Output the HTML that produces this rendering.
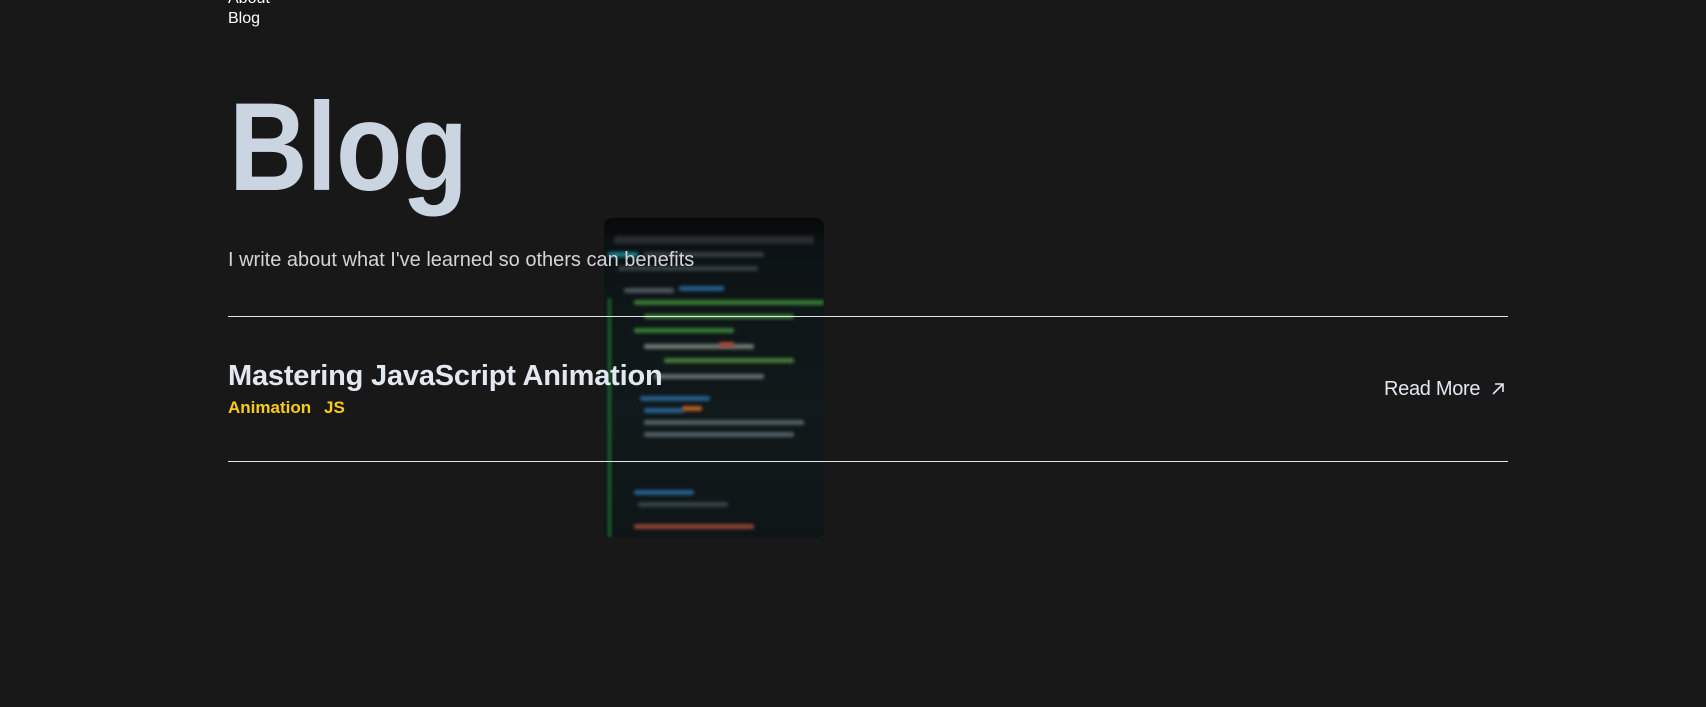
<!DOCTYPE html>
<html><head><meta charset="utf-8"><style>
html,body{margin:0;padding:0;width:1706px;height:707px;background:#181818;overflow:hidden;font-family:"Liberation Sans",sans-serif;position:relative}
.a{position:absolute;white-space:nowrap}
.nav{color:#fff;font-size:16px;left:228px}
.big{left:229px;top:85px;font-size:125px;color:#cbd5e1;letter-spacing:-1px;line-height:1;font-weight:bold;transform:scaleX(0.87);transform-origin:left}
.sub{left:228px;top:249px;font-size:20px;color:#d4d4d8;letter-spacing:0px}
.line{left:228px;width:1280px;height:1px;background:#e5e5e5}
.img{left:604px;top:218px;width:220px;height:320px;border-radius:8px;overflow:hidden;background:linear-gradient(180deg,#050707 0%,#0c1315 10%,#0f1a1c 60%,#0e1517 100%);opacity:.85}
.img i{position:absolute;height:5px;border-radius:2px;filter:blur(1.5px)}
.title{left:228px;top:360px;font-size:29px;font-weight:bold;color:#e2e8f0;letter-spacing:-0.2px}
.tag{top:398px;font-size:17px;font-weight:bold;color:#facc15}
.rm{left:1384px;top:378px;font-size:20px;color:#e2e8f0;letter-spacing:-0.3px}
</style></head><body>
<div class="a nav" style="top:-10px">About</div>
<div class="a nav" style="top:10px">Blog</div>
<div class="a big">Blog</div>
<div class="a img">
<i style="left:10px;top:18px;width:200px;background:#2a3035;height:8px"></i>
<i style="left:4px;top:34px;width:30px;background:#1a8fa0"></i>
<i style="left:40px;top:34px;width:120px;background:#3a4448"></i>
<i style="left:14px;top:48px;width:140px;background:#3a4448"></i>
<i style="left:20px;top:70px;width:50px;background:#55606a"></i>
<i style="left:75px;top:68px;width:45px;background:#2a6aa0"></i>
<i style="left:30px;top:82px;width:190px;background:#3d8a3a"></i>
<i style="left:40px;top:96px;width:150px;background:#3d8a3a"></i>
<i style="left:30px;top:110px;width:100px;background:#3d8a3a"></i>
<i style="left:40px;top:126px;width:110px;background:#7a8a80"></i>
<i style="left:115px;top:124px;width:15px;background:#c04a3a"></i>
<i style="left:60px;top:140px;width:130px;background:#4a8a40"></i>
<i style="left:50px;top:156px;width:110px;background:#70787c"></i>
<i style="left:36px;top:178px;width:70px;background:#2a6aa0"></i>
<i style="left:40px;top:190px;width:40px;background:#2a6aa0"></i>
<i style="left:78px;top:188px;width:20px;background:#d06a2a"></i>
<i style="left:40px;top:202px;width:160px;background:#5a6a70"></i>
<i style="left:40px;top:214px;width:150px;background:#5a6a70"></i>
<i style="left:30px;top:272px;width:60px;background:#2a6aa0"></i>
<i style="left:34px;top:284px;width:90px;background:#3a4a50"></i>
<i style="left:30px;top:306px;width:120px;background:#a04a3a"></i>
<i style="left:4px;top:80px;width:3px;height:240px;background:#1f7a30"></i>
</div>
<div class="a sub">I write about what I've learned so others can benefits</div>
<div class="a line" style="top:316px"></div>
<div class="a title">Mastering JavaScript Animation</div>
<div class="a tag" style="left:228px">Animation</div>
<div class="a tag" style="left:324px">JS</div>
<div class="a rm">Read More</div>
<svg class="a" style="left:1490px;top:381px" width="16" height="16" viewBox="0 0 16 16"><path d="M3 13L13 3M5 3H13V11" fill="none" stroke="#e2e8f0" stroke-width="1.6"/></svg>
<div class="a line" style="top:461px"></div>
</body></html>
